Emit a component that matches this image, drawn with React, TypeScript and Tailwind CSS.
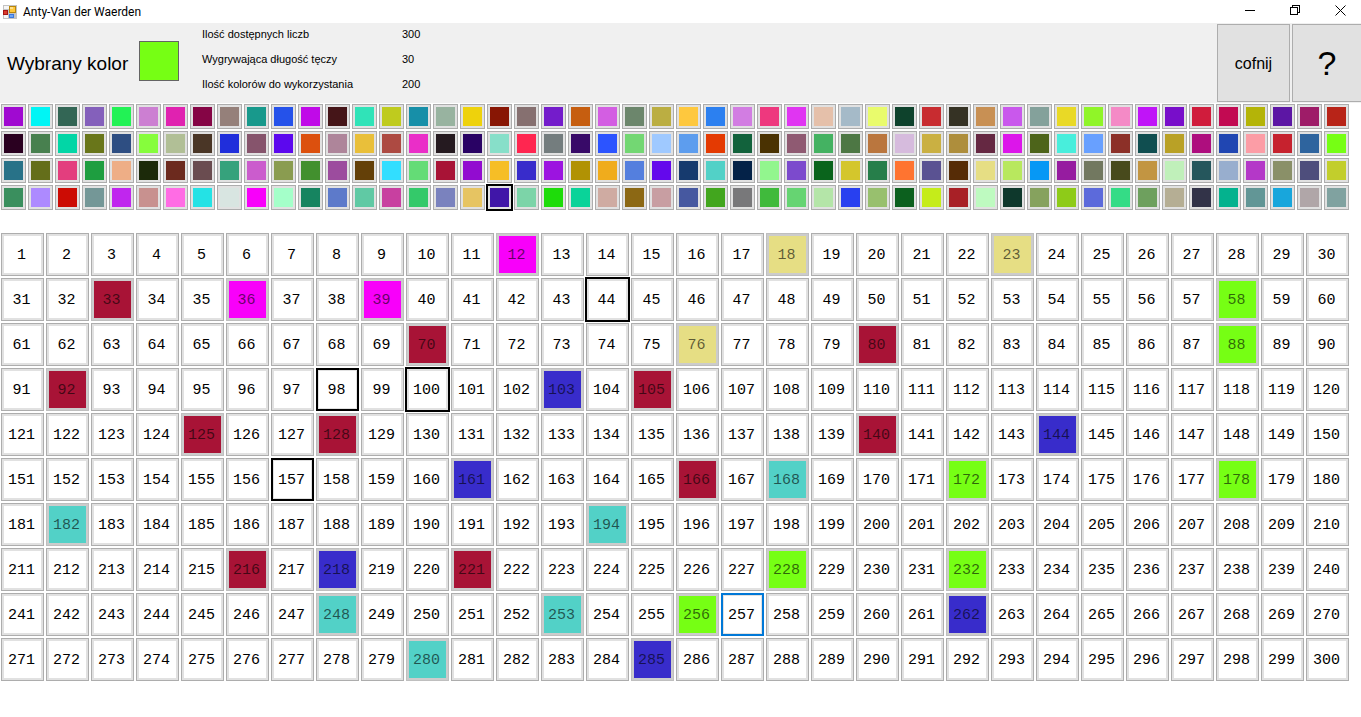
import { useState } from "react";

const palette: string[] = [
  "bg-[#a00ad1]", "bg-[#00f5f5]", "bg-[#336655]", "bg-[#8460bb]", "bg-[#22f255]", "bg-[#cc7fd2]", "bg-[#e022b0]", "bg-[#850545]", "bg-[#95807a]", "bg-[#18998c]",
  "bg-[#2552ea]", "bg-[#c00ae8]", "bg-[#451518]", "bg-[#30e3b8]", "bg-[#bfcb1e]", "bg-[#178fa8]", "bg-[#98b3a0]", "bg-[#eed20c]", "bg-[#881604]", "bg-[#867070]",
  "bg-[#741ccb]", "bg-[#c65e10]", "bg-[#d35ee2]", "bg-[#6c866c]", "bg-[#bbae42]", "bg-[#fec83e]", "bg-[#2c80f0]", "bg-[#d27de2]", "bg-[#ee387e]", "bg-[#e035f2]",
  "bg-[#e5c0aa]", "bg-[#a5bac8]", "bg-[#e9fb6c]", "bg-[#0e422c]", "bg-[#c82c30]", "bg-[#353224]", "bg-[#c89054]", "bg-[#c958ec]", "bg-[#84a19b]", "bg-[#e9d926]",
  "bg-[#90f528]", "bg-[#f48ac6]", "bg-[#c014f8]", "bg-[#780eca]", "bg-[#d01c3c]", "bg-[#c20a52]", "bg-[#b4b408]", "bg-[#5c16a4]", "bg-[#9e1c68]", "bg-[#b82418]",
  "bg-[#2a0020]", "bg-[#48804f]", "bg-[#02d6a6]", "bg-[#69761a]", "bg-[#2e4e82]", "bg-[#86fd3c]", "bg-[#b1bf96]", "bg-[#4a3626]", "bg-[#202edb]", "bg-[#86546c]",
  "bg-[#5c08ee]", "bg-[#dc500e]", "bg-[#ae859a]", "bg-[#e9bf3a]", "bg-[#ad4a42]", "bg-[#ea2ec8]", "bg-[#251a20]", "bg-[#290264]", "bg-[#87dfc9]", "bg-[#ff2650]",
  "bg-[#747d7e]", "bg-[#380a68]", "bg-[#2c54ff]", "bg-[#73d773]", "bg-[#9fc9ff]", "bg-[#5d9dee]", "bg-[#e43a02]", "bg-[#12623c]", "bg-[#4a3202]", "bg-[#8f5a72]",
  "bg-[#44b262]", "bg-[#4d7744]", "bg-[#ba763e]", "bg-[#d6bbdd]", "bg-[#cab042]", "bg-[#ae8e3c]", "bg-[#652842]", "bg-[#dc16ea]", "bg-[#4d641a]", "bg-[#48eedc]",
  "bg-[#68a0ff]", "bg-[#8c3028]", "bg-[#104e50]", "bg-[#b9a126]", "bg-[#ae0e7e]", "bg-[#2046b2]", "bg-[#fc9da6]", "bg-[#c6222e]", "bg-[#2e649e]", "bg-[#76ff14]",
  "bg-[#287288]", "bg-[#646e1a]", "bg-[#e33e7e]", "bg-[#1e9e40]", "bg-[#eeae86]", "bg-[#1c2a0a]", "bg-[#6c2a1e]", "bg-[#6a4c50]", "bg-[#36a27c]", "bg-[#cb5ccd]",
  "bg-[#8a9c50]", "bg-[#42902e]", "bg-[#9c4c9e]", "bg-[#644008]", "bg-[#32deff]", "bg-[#64dc76]", "bg-[#a81336]", "bg-[#920cd0]", "bg-[#f6be26]", "bg-[#382ccb]",
  "bg-[#9c14e0]", "bg-[#b19204]", "bg-[#f0ac1c]", "bg-[#547fde]", "bg-[#6408ec]", "bg-[#163a6e]", "bg-[#52d1c7]", "bg-[#042248]", "bg-[#92f68e]", "bg-[#7c4acd]",
  "bg-[#0a641c]", "bg-[#d4c62c]", "bg-[#267e4a]", "bg-[#ff7430]", "bg-[#5a5292]", "bg-[#562c06]", "bg-[#e6de84]", "bg-[#b8e85e]", "bg-[#0698f5]", "bg-[#961ca0]",
  "bg-[#727860]", "bg-[#484a1c]", "bg-[#c29542]", "bg-[#c0f0ba]", "bg-[#25565c]", "bg-[#98aece]", "bg-[#b438c8]", "bg-[#8a9068]", "bg-[#4e4e7c]", "bg-[#c2ce2c]",
  "bg-[#3a8f5e]", "bg-[#ad8aff]", "bg-[#cc0c04]", "bg-[#749797]", "bg-[#c026ee]", "bg-[#c8918f]", "bg-[#ff6ce4]", "bg-[#24e2e5]", "bg-[#d8e5e1]", "bg-[#f800fa]",
  "bg-[#a4ffc9]", "bg-[#168460]", "bg-[#5d7aca]", "bg-[#60c9a4]", "bg-[#c840a0]", "bg-[#34c96a]", "bg-[#7a82be]", "bg-[#e6c462]", "bg-[#4016a8]", "bg-[#7cd4a8]",
  "bg-[#1edc0a]", "bg-[#0ad399]", "bg-[#cfaba2]", "bg-[#8c6814]", "bg-[#c89ea2]", "bg-[#4658a0]", "bg-[#42a61e]", "bg-[#78787a]", "bg-[#40ba3c]", "bg-[#66d472]",
  "bg-[#b4e5a8]", "bg-[#2840f0]", "bg-[#98c06e]", "bg-[#0c601e]", "bg-[#c5ec1a]", "bg-[#a82026]", "bg-[#befac0]", "bg-[#0e382c]", "bg-[#86a25e]", "bg-[#8ecb18]",
  "bg-[#5c6adb]", "bg-[#34dc86]", "bg-[#6ea05e]", "bg-[#b5ae94]", "bg-[#323348]", "bg-[#04b28e]", "bg-[#629696]", "bg-[#18a6dc]", "bg-[#b0a6a8]", "bg-[#80a2a0]",
];

const MARKED_SWATCH = 168;

const outlines: Record<number, string> = {
  44: "outline-2 -outline-offset-1 outline-black",
  98: "outline-2 -outline-offset-2 outline-black",
  100: "outline-2 -outline-offset-1 outline-black",
  157: "outline-2 -outline-offset-2 outline-black",
  257: "outline-2 -outline-offset-2 outline-[#0078d7]",
};

const moves: { fill: string; numbers: number[] }[] = [
  { fill: "bg-[#f800fa]", numbers: [12, 36, 39] },
  { fill: "bg-[#e6de84]", numbers: [18, 23, 76] },
  { fill: "bg-[#a81336]", numbers: [33, 70, 80, 92, 105, 125, 128, 140, 166, 216, 221] },
  { fill: "bg-[#382ccb]", numbers: [103, 144, 161, 218, 262, 285] },
  { fill: "bg-[#52d1c7]", numbers: [168, 182, 194, 248, 253, 280] },
  { fill: "bg-[#76ff14]", numbers: [58, 88, 172, 178, 228, 232, 256] },
];

const initial: Record<number, string> = {};
moves.forEach((m) => m.numbers.forEach((n) => (initial[n] = m.fill)));

const stats = [
  ["Ilość dostępnych liczb", "300"],
  ["Wygrywająca długość tęczy", "30"],
  ["Ilość kolorów do wykorzystania", "200"],
];

function AppIcon() {
  return (
    <svg width="14" height="14" viewBox="0 0 14 14" aria-hidden="true" shapeRendering="crispEdges">
      <path d="M0 0h14v14H0z" fill="#c3c3c3" />
      <path d="M1 1h5v3H1zM1 10h4v3H1z" fill="#f5f5f5" />
      <path d="M6 1h7v7H6z" fill="#b8860b" />
      <path d="M7 2h5v5H7z" fill="#ffc83c" />
      <path d="M7 2h3v2H7z" fill="#ffe08a" />
      <path d="M0 5h5v5H0z" fill="#a51414" />
      <path d="M1 6h3v3H1z" fill="#d93a2b" />
      <path d="M6 9h5v4H6z" fill="#3c78dc" />
      <path d="M7 10h3v2H7z" fill="#6ea5f5" />
    </svg>
  );
}

function TitleBar() {
  return (
    <div className="flex h-[23px] items-center bg-white pl-[3px] font-[Roboto,sans-serif] text-[12px] leading-4">
      <AppIcon />
      <h1 className="ml-1.5 flex-1">Anty-Van der Waerden</h1>
      <div className="-mr-0.5 flex h-full items-center pb-0.5">
        <button aria-label="Minimalizuj" className="flex w-[45px] justify-center">
          <svg width="11" height="11" shapeRendering="crispEdges"><path d="M0 5.5h10" stroke="#000" /></svg>
        </button>
        <button aria-label="Przywróć" className="flex w-[45px] justify-center">
          <svg width="11" height="11" fill="none" stroke="#000" shapeRendering="crispEdges">
            <path d="M.5 2.5h7v7h-7zM2.5 2.5v-2h7v7h-2" />
          </svg>
        </button>
        <button aria-label="Zamknij" className="flex w-[45px] justify-center">
          <svg width="11" height="11" stroke="#000"><path d="M.5.5l10 10M10.5.5l-10 10" /></svg>
        </button>
      </div>
    </div>
  );
}

export default function App() {
  const [color, setColor] = useState("bg-[#76ff14]");
  const [board, setBoard] = useState(initial);

  return (
    <div className="min-h-screen bg-white font-['Liberation_Sans',Arial,sans-serif] text-black">
      <TitleBar />
      <header className="flex h-20 bg-[#f0f0f0] pl-[7px]">
        <div className="flex w-[195px] items-center gap-3 pb-1">
          <span className="w-[120px] whitespace-nowrap pt-1.5 text-[19px] leading-6">Wybrany kolor</span>
          <span className={`size-10 border border-[#646464] ${color}`} />
        </div>
        <dl className="flex flex-1 flex-col justify-between pt-0.5 pb-2.5 text-[11px] leading-[18px]">
          {stats.map(([label, value]) => (
            <div key={label} className="flex">
              <dt className="w-[200px] whitespace-nowrap">{label}</dt>
              <dd>{value}</dd>
            </div>
          ))}
        </dl>
        <div className="flex gap-0.5 py-px">
          <button className="w-[73px] border border-[#adadad] bg-[#e1e1e1] pt-0.5 text-[16px]">cofnij</button>
          <button className="w-[69px] border border-r-0 border-[#adadad] bg-[#e1e1e1] text-[34px]">?</button>
        </div>
      </header>
      <main className="pl-px">
        <div className="grid grid-cols-[repeat(auto-fill,25px)] gap-0.5 pt-px">
          {palette.map((fill, i) => (
            <button
              key={i}
              aria-label={`Kolor ${i + 1}`}
              onClick={() => setColor(fill)}
              className={`size-[25px] border border-[#adadad] bg-[#e1e1e1] p-0.5 ${
                i === MARKED_SWATCH ? "outline-2 -outline-offset-1 outline-black" : ""
              }`}
            >
              <span className={`block size-full ${fill}`} />
            </button>
          ))}
        </div>
        <div className="mt-[23px] grid grid-cols-[repeat(auto-fill,43px)] gap-0.5 font-['Liberation_Mono',monospace] text-[15px] leading-none">
          {Array.from({ length: 300 }, (_, i) => i + 1).map((n) => {
            const fill = board[n];
            return (
              <button
                key={n}
                disabled={Boolean(fill)}
                onClick={() => setBoard({ ...board, [n]: color })}
                className={`size-[43px] border p-0.5 ${
                  fill ? "border-[#bfbfbf] bg-[#cccccc] text-black/60" : "border-[#adadad] bg-[#e1e1e1]"
                } ${outlines[n] ?? ""}`}
              >
                <span className={`flex size-full items-center justify-center pt-0.5 pr-0.5 ${fill ?? "bg-white"}`}>{n}</span>
              </button>
            );
          })}
        </div>
      </main>
    </div>
  );
}
